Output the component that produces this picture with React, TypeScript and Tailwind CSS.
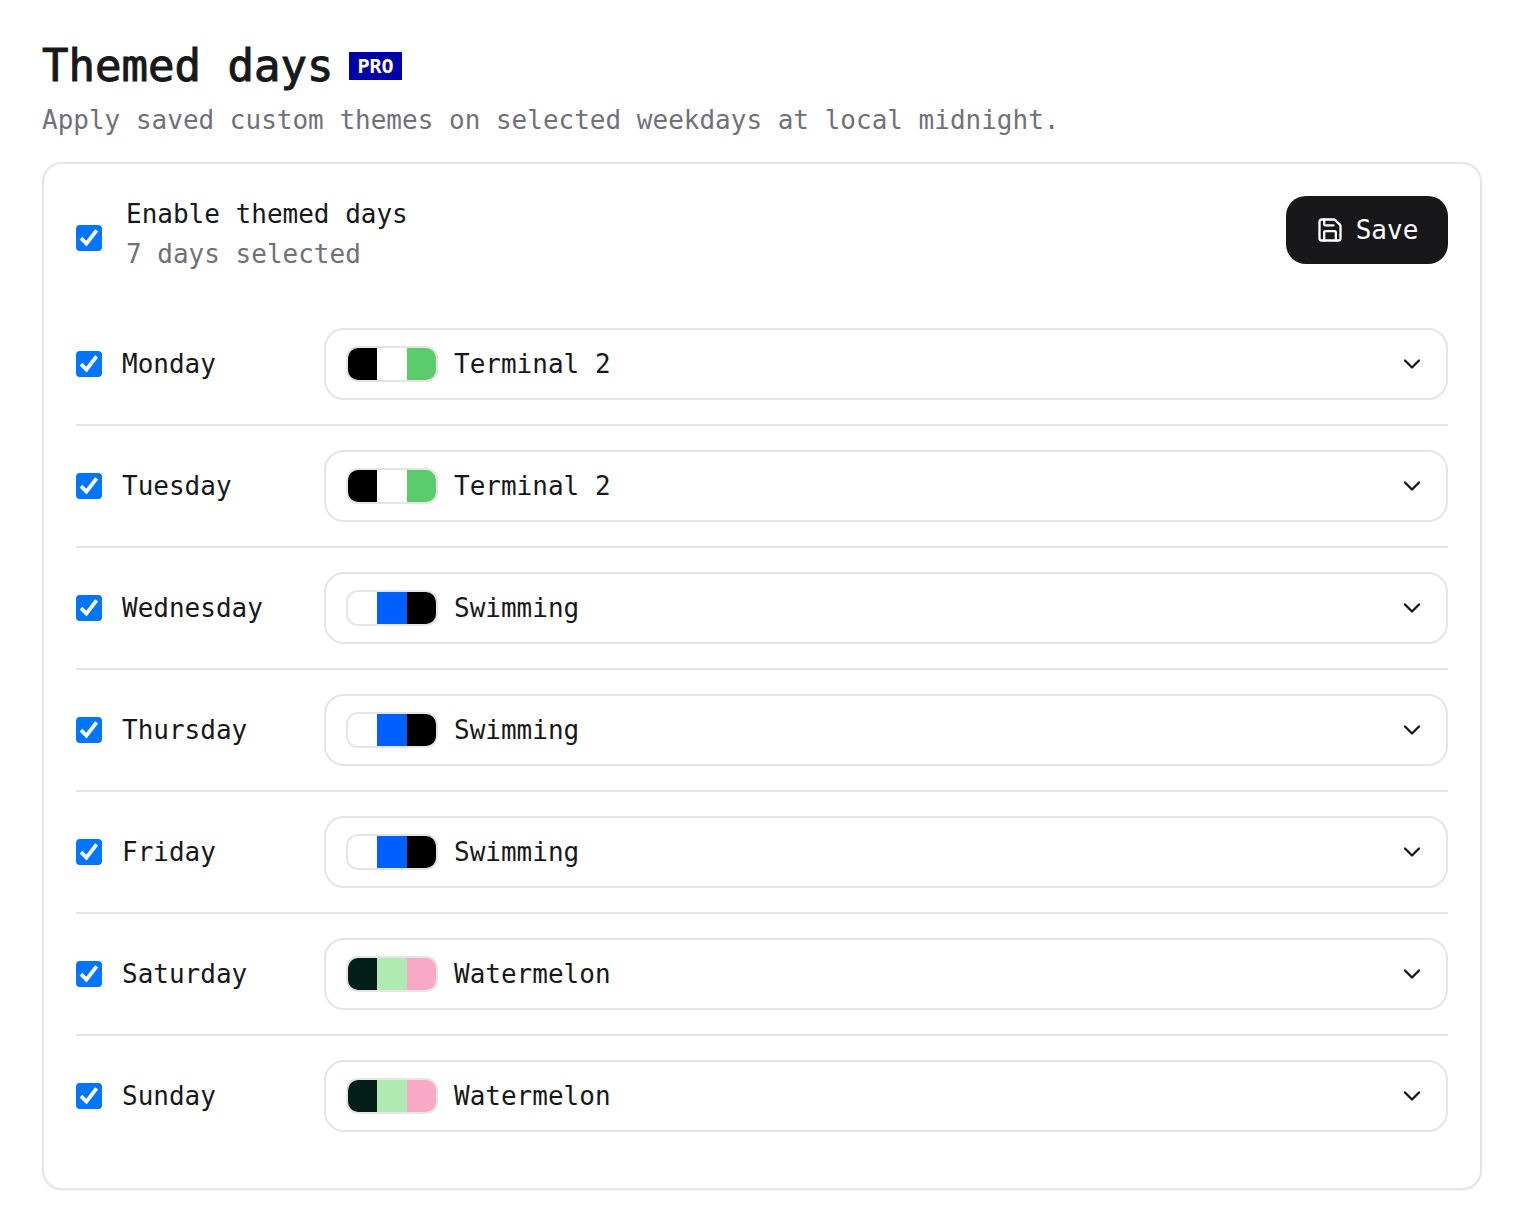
import { useState } from "react";
import type { ComponentProps } from "react";
import { ChevronDown, Save } from "lucide-react";

type Theme = {
    name: string;
    swatch: string[];
}

type Day = {
    name: string;
    enabled: boolean;
    theme: string;
}

const themes: Theme[] = [
    { name: "Terminal 2", swatch: ["bg-black", "bg-white", "bg-[#5ccb6c]"] },
    { name: "Swimming", swatch: ["bg-white", "bg-[#0060ff]", "bg-black"] },
    { name: "Watermelon", swatch: ["bg-[#041f1a]", "bg-[#aeeab2]", "bg-[#f9a9c6]"] },
];

const initialDays: Day[] = [
    { name: "Monday", enabled: true, theme: "Terminal 2" },
    { name: "Tuesday", enabled: true, theme: "Terminal 2" },
    { name: "Wednesday", enabled: true, theme: "Swimming" },
    { name: "Thursday", enabled: true, theme: "Swimming" },
    { name: "Friday", enabled: true, theme: "Swimming" },
    { name: "Saturday", enabled: true, theme: "Watermelon" },
    { name: "Sunday", enabled: true, theme: "Watermelon" },
];

function Checkbox(props: ComponentProps<"input">) {
    return (
        <span className="grid size-[26px] shrink-0">
            <input
                type="checkbox"
                className="peer col-start-1 row-start-1 size-full appearance-none rounded-[4px] border-2 border-[#767676] bg-white checked:border-[#0075ff] checked:bg-[#0075ff]"
                {...props}
            />
            <svg
                viewBox="0 0 26 26"
                fill="none"
                stroke="white"
                strokeWidth="3.8"
                className="pointer-events-none invisible z-10 col-start-1 row-start-1 size-full peer-checked:visible"
            >
                <path d="M5 13.2 L10.4 18.6 L20.6 5.4" />
            </svg>
        </span>
    );
}

function Swatch({ colors }: { colors: string[] }) {
    return (
        <span className="flex h-9 w-[92px] overflow-hidden rounded-xl border-2 border-[#e5e5e5]">
            {colors.map((color, i) => (
                <span key={i} className={`flex-1 ${color}`} />
            ))}
        </span>
    );
}

function ThemeSelect({ day, onChange }: { day: Day; onChange: (theme: string) => void }) {
    const current = themes.find((t) => t.name === day.theme) ?? themes[0];

    // select and its decoration share one grid cell, so the whole box stays clickable
    return (
        <div className="grid min-w-0 flex-1">
            <select
                aria-label={`${day.name} theme`}
                value={day.theme}
                onChange={(e) => onChange(e.target.value)}
                className="col-start-1 row-start-1 h-[72px] w-full appearance-none rounded-[20px] border-2 border-[#e5e5e5] bg-white pr-16 pl-32"
            >
                {themes.map((t) => (
                    <option key={t.name}>{t.name}</option>
                ))}
            </select>
            <div className="pointer-events-none z-10 col-start-1 row-start-1 flex items-center justify-between px-[22px]">
                <Swatch colors={current.swatch} />
                <ChevronDown size={28} />
            </div>
        </div>
    );
}

export default function App() {
    const [enabled, setEnabled] = useState(true);
    const [days, setDays] = useState(initialDays);

    const selected = days.filter((d) => d.enabled).length;

    const updateDay = (name: string, patch: Partial<Day>) => {
        setDays(days.map((d) => (d.name === name ? { ...d, ...patch } : d)));
    }

    return (
        <main className="bg-white py-[42px] pr-[54px] pl-[42px] font-['DejaVu_Sans_Mono',monospace] text-[26px] leading-9 text-[#18181b]">
            <div className="flex items-center gap-4">
                <h1 className="text-[44px] leading-[48px] font-medium [-webkit-text-stroke:1px]">Themed days</h1>
                <span className="bg-[#0000aa] px-2 text-[20px] leading-7 font-bold text-white">PRO</span>
            </div>
            <p className="mt-3 text-[#71717a]">
                Apply saved custom themes on selected weekdays at local midnight.
            </p>

            <section className="mt-6 rounded-[20px] border-2 border-[#e5e5e5] p-8 shadow-xs">
                <div className="flex items-start justify-between">
                    <label className="flex items-center gap-6">
                        <span className="mt-2">
                            <Checkbox checked={enabled} onChange={(e) => setEnabled(e.target.checked)} />
                        </span>
                        <span className="flex flex-col gap-1">
                            <span className="font-medium">Enable themed days</span>
                            <span className="text-[#71717a]">{selected} days selected</span>
                        </span>
                    </label>
                    <button
                        type="button"
                        className="flex h-[68px] w-[162px] items-center justify-center gap-3 rounded-[20px] bg-[#18181b] text-white"
                    >
                        <Save size={28} />
                        Save
                    </button>
                </div>

                <ul className="mt-8 divide-y-2 divide-[#e5e5e5]">
                    {days.map((day) => (
                        <li key={day.name} className="flex items-center py-6">
                            <label className="flex w-[248px] items-center gap-5">
                                <Checkbox
                                    checked={day.enabled}
                                    onChange={(e) => updateDay(day.name, { enabled: e.target.checked })}
                                />
                                {day.name}
                            </label>
                            <ThemeSelect day={day} onChange={(theme) => updateDay(day.name, { theme })} />
                        </li>
                    ))}
                </ul>
            </section>
        </main>
    );
}
